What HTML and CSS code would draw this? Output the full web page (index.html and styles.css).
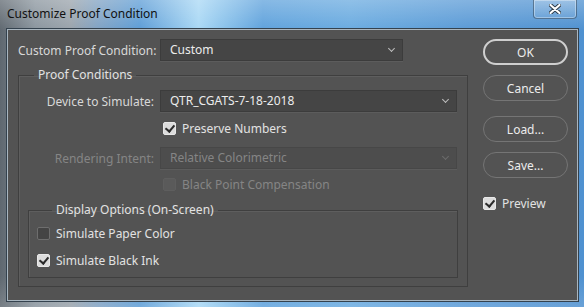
FILE: index.html
```html
<!DOCTYPE html>
<html lang="en">
<head>
    <meta charset="UTF-8">
    <title>Customize Proof Condition</title>
    <link rel="stylesheet" href="styles.css">
</head>
<body>
<div class="window">
    <div class="titlebar">
        <span class="title">Customize Proof Condition</span>
        <div class="close-btn">
            <svg width="12" height="10" viewBox="0 0 12 10">
                <path d="M1.5 1 L10.5 9 M10.5 1 L1.5 9" stroke="#2d3a46" stroke-width="4" stroke-linecap="round"/>
                <path d="M1.5 1 L10.5 9 M10.5 1 L1.5 9" stroke="#ffffff" stroke-width="2.2" stroke-linecap="round"/>
            </svg>
        </div>
    </div>

    <div class="dialog">
        <div class="main">
            <div class="row top-row">
                <label class="row-label">Custom Proof Condition:</label>
                <div class="select select-short">Custom <span class="chev"></span></div>
            </div>

            <fieldset class="group">
                <legend>Proof Conditions</legend>
                <div class="row device-row">
                    <label class="row-label">Device to Simulate:</label>
                    <div class="select">QTR_CGATS-7-18-2018 <span class="chev"></span></div>
                </div>
                <div class="check-row preserve-row">
                    <span class="box checked"></span>
                    <span>Preserve Numbers</span>
                </div>
                <div class="row intent-row disabled">
                    <label class="row-label">Rendering Intent:</label>
                    <div class="select">Relative Colorimetric <span class="chev"></span></div>
                </div>
                <div class="check-row bpc-row disabled">
                    <span class="box"></span>
                    <span>Black Point Compensation</span>
                </div>

                <fieldset class="group inner-group">
                    <legend>Display Options (On-Screen)</legend>
                    <div class="check-row paper-row">
                        <span class="box"></span>
                        <span>Simulate Paper Color</span>
                    </div>
                    <div class="check-row ink-row">
                        <span class="box checked"></span>
                        <span>Simulate Black Ink</span>
                    </div>
                </fieldset>
            </fieldset>
        </div>

        <div class="side">
            <button class="btn btn-default">OK</button>
            <button class="btn btn-cancel">Cancel</button>
            <button class="btn btn-load">Load...</button>
            <button class="btn btn-save">Save...</button>
            <div class="check-row preview-row">
                <span class="box checked"></span>
                <span>Preview</span>
            </div>
        </div>
    </div>
</div>
</body>
</html>
```

FILE: styles.css
```css
* {
    box-sizing: border-box;
}
body {
    margin: 0;
    width: 584px;
    height: 307px;
    overflow: hidden;
    font-family: 'Noto Sans', 'Open Sans', sans-serif;
    font-size: 12px;
}
.window {
    width: 584px;
    height: 307px;
    background:
        linear-gradient(180deg, rgba(255, 255, 255, 0.25) 0%, rgba(255, 255, 255, 0) 10%, rgba(255, 255, 255, 0) 90%, rgba(255, 255, 255, 0.15) 100%),
        linear-gradient(90deg, #5f6870 0%, #8a959e 6%, #9aa3ab 12%, #7fa2c4 17%, #5d9dd6 24%, #a9d8f5 34%, #8cc4ec 38%, #5fa2dc 45%, #6aabe0 60%, #5a9ad6 80%, #4f91d0 100%);
}
.titlebar {
    height: 29px;
    display: flex;
    align-items: flex-start;
    justify-content: space-between;
    padding-left: 7px;
}
.title {
    font-family: 'Noto Sans', sans-serif;
    font-size: 12px;
    color: #111111;
    line-height: 28px;
}
.close-btn {
    width: 44px;
    height: 19px;
    margin-right: 7px;
    border: 1px solid rgba(40, 60, 80, 0.55);
    border-top: none;
    border-radius: 0 0 4px 4px;
    box-shadow: inset 0 0 0 1px rgba(255, 255, 255, 0.35);
    background: linear-gradient(180deg, rgba(255, 255, 255, 0.25), rgba(255, 255, 255, 0.05));
    display: flex;
    align-items: center;
    justify-content: center;
}
.dialog {
    margin: 0 6px 0 7px;
    height: 272px;
    background-color: #535353;
    border: 1px solid #a9b6c0;
    box-shadow: 0 0 0 1px #34424e;
    display: flex;
    gap: 15px;
    padding: 9px 9px 0 10px;
    color: #e2e2e2;
}
.main {
    width: 450px;
}
.row {
    display: flex;
    align-items: center;
    gap: 6px;
}
.row-label {
    text-align: right;
    color: #d8d8d8;
    white-space: nowrap;
}
.top-row .row-label {
    width: 136px;
    flex-shrink: 0;
}
.group .row-label {
    width: 135px;
    flex-shrink: 0;
}
.select {
    height: 22px;
    width: 297px;
    background-color: #454545;
    border: 1px solid #3c3c3c;
    box-shadow: 0 1px 0 #5c5c5c;
    padding-left: 9px;
    line-height: 20px;
    color: #ececec;
    position: relative;
}
.select-short {
    width: 243px;
}
.chev {
    position: absolute;
    right: 8px;
    top: 6px;
    width: 5px;
    height: 5px;
    border-right: 1.3px solid #bdbdbd;
    border-bottom: 1.3px solid #bdbdbd;
    transform: rotate(45deg);
}
.group {
    margin: 6px 0 0 0;
    padding: 0 9px 8px 0;
    border: 1px solid #3f3f3f;
    box-shadow: inset 1px 1px 0 #5e5e5e;
    min-width: 0;
}
.group legend {
    margin-left: 15px;
    padding: 0 4px;
    line-height: 16px;
    color: #e2e2e2;
}
.device-row {
    margin-top: 7px;
}
.check-row {
    display: flex;
    align-items: center;
    gap: 6px;
    height: 16px;
}
.box {
    width: 13px;
    height: 13px;
    border-radius: 2px;
    background-color: #444444;
    border: 1px solid #6e6e6e;
    position: relative;
    flex-shrink: 0;
}
.box.checked {
    background-color: #dcdcdc;
    border-color: #e8e8e8;
}
.box.checked::after {
    content: '';
    position: absolute;
    left: 3px;
    top: 0px;
    width: 4px;
    height: 7px;
    border-right: 2px solid #2a2a2a;
    border-bottom: 2px solid #2a2a2a;
    transform: rotate(40deg);
}
.preserve-row {
    margin-top: 8px;
    margin-left: 144px;
}
.intent-row {
    margin-top: 11px;
}
.bpc-row {
    margin-top: 7px;
    margin-left: 144px;
}
.disabled {
    color: #858585;
}
.disabled .row-label,
.disabled .select {
    color: #858585;
}
.disabled .select {
    background-color: #4d4d4d;
    border-color: #474747;
}
.disabled .chev {
    border-color: #6c6c6c;
}
.disabled .box {
    background-color: #5a5a5a;
    border-color: #5e5e5e;
}
.inner-group {
    margin: 10px 0 0 9px;
    padding: 0 0 9px 8px;
}
.paper-row {
    margin-top: 7px;
}
.ink-row {
    margin-top: 11px;
}
.side {
    width: 85px;
    display: flex;
    flex-direction: column;
}
.btn {
    height: 26px;
    border-radius: 13px;
    background-color: #535353;
    border: 1.5px solid #757575;
    color: #ececec;
    font-family: 'Noto Sans', sans-serif;
    font-size: 12px;
    padding: 0;
}
.btn-default {
    border: 2px solid #cfcfcf;
}
.btn-cancel {
    margin-top: 10px;
}
.btn-load {
    margin-top: 15px;
}
.btn-save {
    margin-top: 10px;
}
.preview-row {
    margin-top: 17px;
}
```
